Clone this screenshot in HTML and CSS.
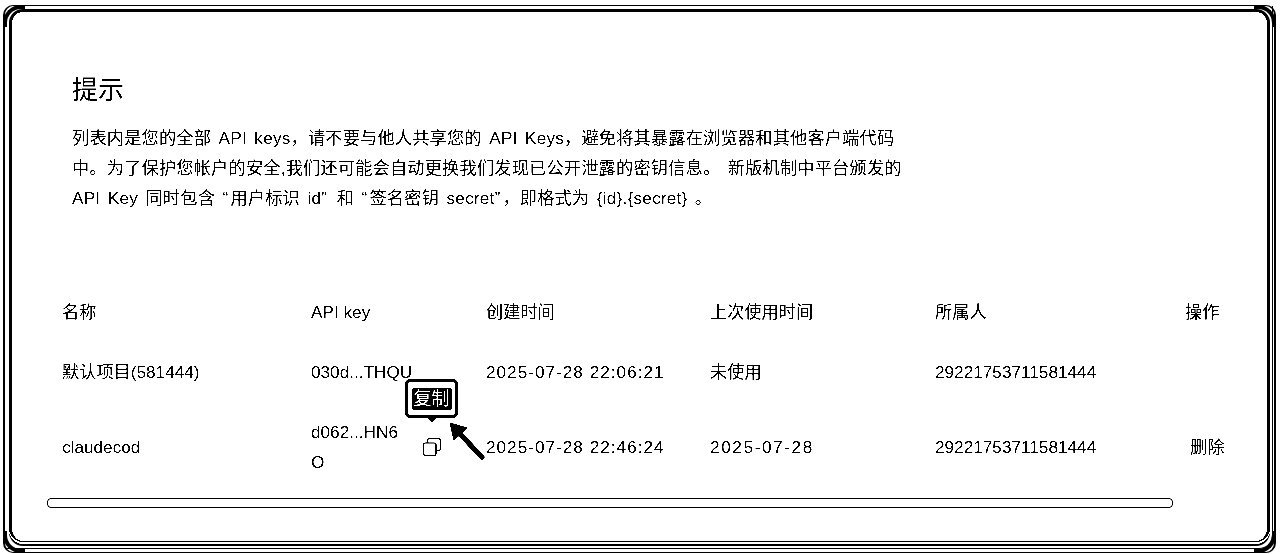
FILE: index.html
```html
<!DOCTYPE html>
<html lang="zh-CN">
<head>
    <meta charset="UTF-8">
    <meta name="viewport" content="width=device-width, initial-scale=1.0">
    <title>API keys</title>
    <link rel="stylesheet" href="styles.css">
</head>
<body>
    <div class="frame-outer">
        <span class="corner corner-tl"></span>
        <span class="corner corner-tr"></span>
        <span class="corner corner-bl"></span>
        <span class="corner corner-br"></span>
        <div class="frame-middle">
            <div class="frame-inner">
                <section class="notice">
                    <h2>提示</h2>
                    <p>列表内是您的全部 API keys，请不要与他人共享您的 API Keys，避免将其暴露在浏览器和其他客户端代码<br>中。为了保护您帐户的安全,我们还可能会自动更换我们发现已公开泄露的密钥信息。 新版机制中平台颁发的<br>API Key 同时包含 <span class="quote">“</span>用户标识 id<span class="quote">”</span> 和 <span class="quote">“</span>签名密钥 secret<span class="quote">”</span>，即格式为 {id}.{secret} 。</p>
                </section>

                <div class="table-wrap">
                    <table class="keys">
                        <thead>
                            <tr>
                                <th class="col-name">名称</th>
                                <th class="col-key">API key</th>
                                <th class="col-created">创建时间</th>
                                <th class="col-used">上次使用时间</th>
                                <th class="col-owner">所属人</th>
                                <th class="col-action">操作</th>
                            </tr>
                        </thead>
                        <tbody>
                            <tr class="row-first">
                                <td>默认项目(581444)</td>
                                <td>030d...THQU</td>
                                <td class="time">2025-07-28 22:06:21</td>
                                <td>未使用</td>
                                <td>29221753711581444</td>
                                <td></td>
                            </tr>
                            <tr class="row-second">
                                <td>claudecod</td>
                                <td class="key-cell">
                                    <div class="key-text">d062...HN6O</div>
                                    <div class="tooltip"><span>复制</span></div>
                                    <svg class="copy-icon" width="18" height="18" viewBox="0 0 18 18" fill="none" stroke="#000" stroke-width="1.2">
                                        <rect x="0.600" y="5" width="12.400" height="12.400" rx="1.500"/>
                                        <path d="M4.500 5V2.200A1.500 1.500 0 0 1 6 0.700H15.800A1.500 1.500 0 0 1 17.300 2.200V11A1.500 1.500 0 0 1 15.800 12.500H13"/>
                                    </svg>
                                    <svg class="arrow" width="36" height="38" viewBox="0 0 36 38" fill="#000" stroke="#000">
                                        <path d="M33 35 9 10" stroke-width="5" stroke-linecap="round"/>
                                        <path d="M1 1 5 18 18 6Z" stroke-width="1"/>
                                    </svg>
                                </td>
                                <td class="time">2025-07-28 22:46:24</td>
                                <td class="day">2025-07-28</td>
                                <td>29221753711581444</td>
                                <td class="action-cell">删除</td>
                            </tr>
                        </tbody>
                    </table>
                    <div class="scrollbar"></div>
                </div>
            </div>
        </div>
    </div>
</body>
</html>
```

FILE: styles.css
```css
* {
    box-sizing: border-box;
}

body {
    margin: 0;
    height: 554px;
    padding: 5px 4px 1px 3px;
    overflow: hidden;
    background-color: #fff;
    color: #000;
    font-family: "Liberation Sans", "Noto Sans CJK SC", sans-serif;
    font-size: 17.2px;
    filter: grayscale(1) contrast(6);
}

/* nested outlines round the card */
.frame-outer {
    position: relative;
    height: 100%;
    border: solid #000;
    border-width: 1px 2px;
    border-radius: 10px;
}

.corner {
    position: absolute;
    width: 22px;
    height: 22px;
    border: 0 solid #000;
}

.corner-tl {
    left: -2px;
    top: -1px;
    border-width: 4px 0 0 4px;
    border-top-left-radius: 18px;
}

.corner-tr {
    right: -2px;
    top: -1px;
    border-width: 4px 4px 0 0;
    border-top-right-radius: 18px;
}

.corner-bl {
    left: -2px;
    bottom: -1px;
    border-width: 0 0 4px 4px;
    border-bottom-left-radius: 18px;
}

.corner-br {
    right: -2px;
    bottom: -1px;
    border-width: 0 4px 4px 0;
    border-bottom-right-radius: 18px;
}

.frame-middle {
    height: calc(100% - 3px);
    margin-right: 1px;
    padding: 3px 2px 6px 4px;
    border-right: 1px solid #000;
    border-bottom: 1px solid #000;
    border-bottom-right-radius: 14px;
}

.frame-inner {
    position: relative;
    height: 100%;
    background-color: #fff;
    border: 3px solid #000;
    border-bottom-width: 1px;
    border-radius: 14px;
    box-shadow: 0 2px 0 #fff, 0 4px 0 #000;
}

.notice {
    padding: 60px 0 0 60px;
}

.notice h2 {
    margin: 0 0 15px;
    font-size: 26px;
    font-weight: 400;
    line-height: 36px;
}

.notice p {
    margin: 0;
    font-size: 17.200px;
    line-height: 30px;
    letter-spacing: 0.200px;
    word-spacing: 2.500px;
    white-space: nowrap;
}

.quote {
    letter-spacing: 2.200px;
}

.table-wrap {
    margin: 69px 0 0 35px;
    width: 1126px;
}

.keys {
    width: 1190px;
    border-collapse: collapse;
    table-layout: fixed;
}

.keys th, .keys td {
    padding: 0 15px;
    text-align: left;
    font-weight: 400;
    font-size: 17.200px;
    line-height: 30px;
}

.keys th {
    height: 60px;
}

.col-name {
    width: 249px;
}

.col-key {
    width: 175px;
}

.col-created {
    width: 224px;
}

.col-used {
    width: 225px;
}

.col-owner {
    width: 250px;
}

.row-first td {
    height: 60px;
}

.row-second td {
    height: 90px;
}

.keys .time {
    letter-spacing: 1px;
}

.keys .day {
    letter-spacing: 1.600px;
}

.key-cell {
    position: relative;
}

.key-text {
    width: 98px;
    word-break: break-all;
}

.keys .action-cell {
    padding-left: 20px;
    white-space: nowrap;
}

.tooltip {
    position: absolute;
    left: 109px;
    top: -23px;
    width: 53px;
    height: 39px;
    display: flex;
    align-items: center;
    justify-content: center;
    background-color: #fff;
    border: 3px solid #000;
    border-radius: 5px;
}

.tooltip::after {
    content: "";
    position: absolute;
    left: 19px;
    bottom: -8px;
    border-style: solid;
    border-width: 6px 5px 0;
    border-color: #000 transparent transparent;
}

.tooltip span {
    padding: 0 2px;
    background-color: #000;
    color: #fff;
    font-size: 18px;
    line-height: 22px;
    border-radius: 3px;
}

.copy-icon {
    position: absolute;
    left: 127px;
    top: 36px;
}

.arrow {
    position: absolute;
    left: 153px;
    top: 20px;
}

.scrollbar {
    margin-top: 6px;
    height: 10px;
    border: 1px solid #000;
    border-radius: 4px;
}
```
